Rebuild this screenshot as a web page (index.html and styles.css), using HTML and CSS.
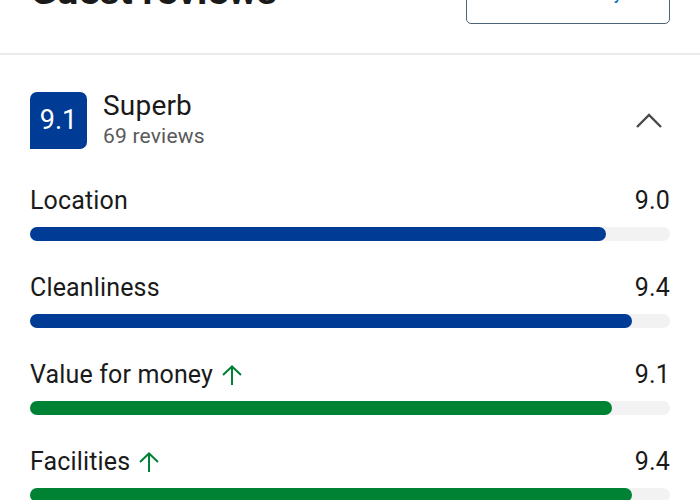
FILE: index.html
```html
<!DOCTYPE html>
<html lang="en">
<head>
    <meta charset="UTF-8">
    <meta name="viewport" content="width=device-width, initial-scale=1.0">
    <title>Guest reviews</title>
    <link rel="stylesheet" href="styles.css">
</head>
<body>

<!-- Header -->
<div class="reviews-header">
    <h2>Guest reviews</h2>
    <button class="outline-btn">See availability</button>
</div>

<!-- Score summary -->
<div class="container">
    <div class="summary">
        <div class="score-badge">9.1</div>
        <div class="summary-text">
            <div class="summary-title">Superb</div>
            <div class="summary-count">69 reviews</div>
        </div>
        <svg class="chevron" width="28" height="16" viewBox="0 0 28 16">
            <polyline points="2,14 14,2 26,14" fill="none" stroke="#4a4a4a" stroke-width="2.4"/>
        </svg>
    </div>

    <!-- Subscores -->
    <div class="subscores">
        <div class="subscore">
            <div class="subscore-head">
                <span class="subscore-label">Location</span>
                <span class="subscore-value">9.0</span>
            </div>
            <div class="bar"><div class="bar-fill" style="width: 90%;"></div></div>
        </div>
        <div class="subscore">
            <div class="subscore-head">
                <span class="subscore-label">Cleanliness</span>
                <span class="subscore-value">9.4</span>
            </div>
            <div class="bar"><div class="bar-fill" style="width: 94%;"></div></div>
        </div>
        <div class="subscore high">
            <div class="subscore-head">
                <span class="subscore-label">Value for money
                    <svg class="arrow-up" width="22" height="20" viewBox="0 0 22 20">
                        <polyline points="2,10 11,1.5 20,10" fill="none" stroke="#008234" stroke-width="2"/>
                        <line x1="11" y1="2" x2="11" y2="20" stroke="#008234" stroke-width="2"/>
                    </svg>
                </span>
                <span class="subscore-value">9.1</span>
            </div>
            <div class="bar"><div class="bar-fill" style="width: 91%;"></div></div>
        </div>
        <div class="subscore high">
            <div class="subscore-head">
                <span class="subscore-label">Facilities
                    <svg class="arrow-up" width="22" height="20" viewBox="0 0 22 20">
                        <polyline points="2,10 11,1.5 20,10" fill="none" stroke="#008234" stroke-width="2"/>
                        <line x1="11" y1="2" x2="11" y2="20" stroke="#008234" stroke-width="2"/>
                    </svg>
                </span>
                <span class="subscore-value">9.4</span>
            </div>
            <div class="bar"><div class="bar-fill" style="width: 94%;"></div></div>
        </div>
    </div>
</div>

</body>
</html>
```

FILE: styles.css
```css
body {
    font-family: Roboto, "Noto Sans", Arial, sans-serif;
    margin: 0;
    padding: 0;
    background-color: #fff;
    color: #1a1a1a;
    overflow: hidden;
}
.reviews-header {
    display: flex;
    justify-content: space-between;
    align-items: flex-start;
    margin-top: -36px;
    padding: 0 30px 29px 30px;
    border-bottom: 2px solid #ebebeb;
}
.reviews-header h2 {
    margin: 4px 0 0 0;
    font-size: 39px;
    line-height: 46px;
    font-weight: 700;
}
.outline-btn {
    width: 204px;
    height: 60px;
    background-color: #fff;
    border: 1px solid #4b6478;
    border-radius: 5px;
    color: #0071c2;
    font-family: inherit;
    font-size: 16px;
    font-weight: 500;
}
.container {
    padding: 35px 30px 0 30px;
}
.summary {
    display: flex;
    align-items: center;
}
.score-badge {
    width: 57px;
    height: 57px;
    background-color: #003b95;
    color: #fff;
    border-radius: 7px 7px 7px 0;
    display: flex;
    align-items: center;
    justify-content: center;
    font-size: 27px;
}
.summary-text {
    margin-left: 16px;
    flex: 1;
}
.summary-title {
    font-size: 28px;
    line-height: 32px;
    letter-spacing: 0.2px;
}
.summary-count {
    font-size: 21px;
    line-height: 28px;
    color: #595959;
    letter-spacing: 0.2px;
}
.chevron {
    margin-right: 7px;
    margin-top: 2px;
}
.subscores {
    margin-top: 36px;
}
.subscore {
    margin-bottom: 32px;
}
.subscore-head {
    display: flex;
    justify-content: space-between;
    font-size: 25px;
    line-height: 30px;
    letter-spacing: 0.15px;
}
.subscore-label {
    display: flex;
    align-items: center;
}
.arrow-up {
    margin-left: 8px;
}
.bar {
    margin-top: 11px;
    height: 14px;
    background-color: #f2f2f2;
    border-radius: 7px;
}
.bar-fill {
    height: 100%;
    background-color: #003b95;
    border-radius: 7px;
}
.subscore.high .bar-fill {
    background-color: #008234;
}
```
